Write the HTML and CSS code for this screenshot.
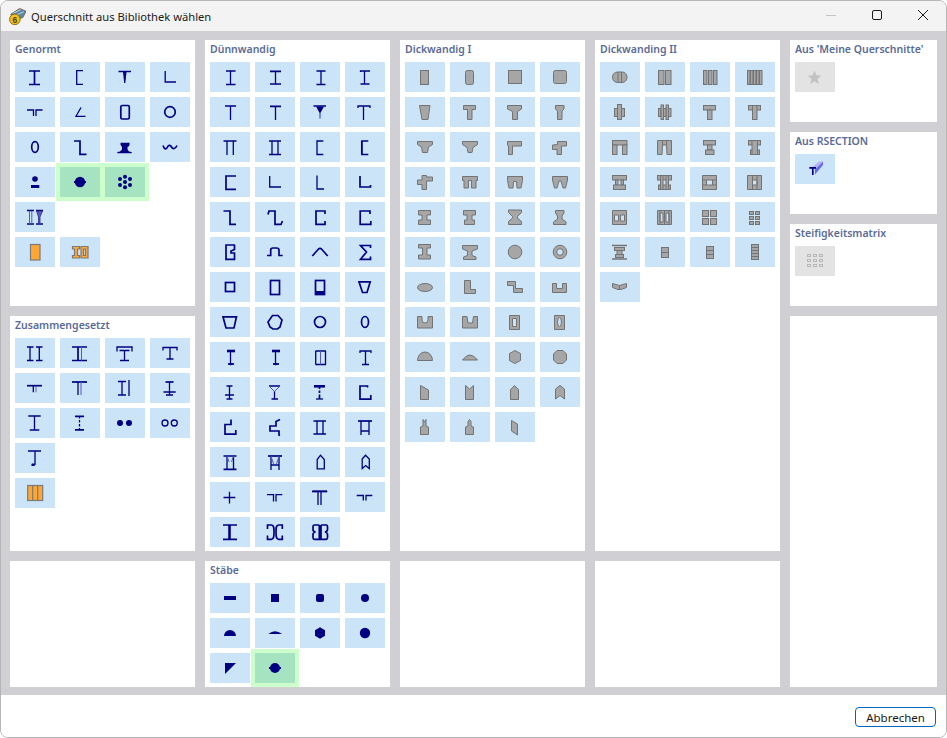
FILE: index.html
```html
<!DOCTYPE html>
<html lang="de">
<head>
<meta charset="utf-8">
<title>Querschnitt aus Bibliothek wählen</title>
<link rel="stylesheet" href="styles.css">
</head>
<body>
<div class="window">
<header class="titlebar">
<svg class="appicon" viewBox="0 0 16 16"><path d="M1.500 6L10 .5L16 3L13 9L6 11Z" fill="#5f87a8" stroke="#6b5a3a" stroke-width=".8"/><path d="M4 5L11 1.500M6 7L14 3.500" stroke="#cfe0ee" stroke-width=".8"/><circle cx="5.500" cy="10.700" r="5" fill="#f3c21f" stroke="#7a5c10" stroke-width=".8"/><text x="3.200" y="14.200" class="appsix">6</text></svg>
<span class="titletext">Querschnitt aus Bibliothek wählen</span>
<div class="winctl">
<svg class="ctl" viewBox="0 0 12 12"><path d="M1 5.500H11" stroke="#c4c4c4"/></svg>
<svg class="ctl" viewBox="0 0 12 12"><rect x="1.500" y=".5" width="9" height="9" rx="1.500" fill="none" stroke="#1a1a1a"/></svg>
<svg class="ctl" viewBox="0 0 12 12"><path d="M1 0L11 10M11 0L1 10" stroke="#1a1a1a" fill="none"/></svg>
</div>
</header>
<main class="content">

<section class="panel p-genormt">
<h2>Genormt</h2>
<div class="tiles">
<button class="tile"><svg class="ic n" viewBox="0 0 40 30"><path d="M14 9H25M14 22.500H25"/><path class="w2" d="M19.500 9V22.500"/></svg></button>
<button class="tile"><svg class="ic n" viewBox="0 0 40 30"><path d="M23 8.700H16.700V22.300H23"/></svg></button>
<button class="tile"><svg class="ic n" viewBox="0 0 40 30"><path class="w2" d="M13.500 9.500H26"/><path class="sf" d="M18 10H21.500L20.300 21H19.200Z"/></svg></button>
<button class="tile"><svg class="ic n" viewBox="0 0 40 30"><path d="M15.200 9V20H26"/></svg></button>

<button class="tile"><svg class="ic n" viewBox="0 0 40 30"><path d="M12 13H18.500V19M27.500 13H21V19"/></svg></button>
<button class="tile"><svg class="ic n" viewBox="0 0 40 30"><path d="M21 10.500L16 19.300H25.500"/></svg></button>
<button class="tile"><svg class="ic n" viewBox="0 0 40 30"><rect class="w2" x="15.800" y="8.500" width="8.500" height="13.500" rx="1.500"/></svg></button>
<button class="tile"><svg class="ic n" viewBox="0 0 40 30"><circle class="w2" cx="20" cy="15" r="5.300"/></svg></button>

<button class="tile"><svg class="ic n" viewBox="0 0 40 30"><ellipse class="w2" cx="20" cy="15" rx="3.300" ry="5.300"/></svg></button>
<button class="tile"><svg class="ic n" viewBox="0 0 40 30"><path class="w2" d="M14 9H20V22.300H26.500"/></svg></button>
<button class="tile"><svg class="ic s" viewBox="0 0 40 30"><path d="M15.500 10.700H24.500Q25 14 22.500 15V17.500L24 19.500L26.700 20V21.300H12.300V20L15 19.500L17 17.500V15Q15 14 15.500 10.700Z"/></svg></button>
<button class="tile"><svg class="ic n" viewBox="0 0 40 30"><path class="w2" d="M13 13.500C14.500 18 16.500 17.500 17.500 15S20.500 13 21.500 15S25 18 27 13.500"/></svg></button>

<button class="tile"><svg class="ic s" viewBox="0 0 40 30"><circle cx="20" cy="12" r="2.800"/><rect x="16" y="18" width="8.300" height="3"/></svg></button>
<button class="tile sel"><svg class="ic s" viewBox="0 0 40 30"><circle cx="20" cy="15" r="5.200"/><rect x="14" y="14" width="12" height="2"/></svg></button>
<button class="tile sel"><svg class="ic s" viewBox="0 0 40 30"><circle cx="20" cy="9.700" r="2"/><circle cx="15" cy="12" r="2"/><circle cx="25" cy="12" r="2"/><circle cx="20" cy="15" r="2"/><circle cx="15" cy="18" r="2"/><circle cx="25" cy="18" r="2"/><circle cx="20" cy="20.300" r="2"/></svg></button>
<span class="slot"></span>

<button class="tile"><svg class="ic n" viewBox="0 0 40 30"><path d="M12 8.500H19M12 22H19M21 8.500H28M21 22H28"/><path class="lt" d="M14.500 9V21.500M16.800 9V21.500"/><path class="mid" d="M21.500 9H27.500L25 15V21.500H23.500V15Z"/></svg></button>
<span class="slot"></span><span class="slot"></span><span class="slot"></span>

<button class="tile"><svg class="ic o" viewBox="0 0 40 30"><rect x="15.500" y="7.500" width="9.500" height="15.500"/></svg></button>
<button class="tile"><svg class="ic o" viewBox="0 0 40 30"><path d="M12.500 9.500H19.500V12H17.500V18.500H19.500V21H12.500V18.500H14.500V12H12.500Z"/><path fill-rule="evenodd" d="M21 9.500H28V21H21ZM23.500 12V18.500H25.500V12Z"/></svg></button>
</div>
</section>

<section class="panel p-duenn">
<h2>Dünnwandig</h2>
<div class="tiles">
<button class="tile"><svg class="ic n" viewBox="0 0 40 30"><path d="M16 9H25.500M16 22.500H25.500M20.500 9V22.500"/></svg></button>
<button class="tile"><svg class="ic n" viewBox="0 0 40 30"><path class="w2" d="M15 9.300H26M15 22H26"/><path d="M20.500 9V22.500"/></svg></button>
<button class="tile"><svg class="ic n" viewBox="0 0 40 30"><path d="M16.500 9H25.500M16.500 22.500H25.500M21 9V22.500"/></svg></button>
<button class="tile"><svg class="ic n" viewBox="0 0 40 30"><path d="M15.500 10V9H25M15.500 22H24.500M19.500 9V22"/></svg></button>

<button class="tile"><svg class="ic n" viewBox="0 0 40 30"><path d="M15 9H26M20.500 9V23"/></svg></button>
<button class="tile"><svg class="ic n" viewBox="0 0 40 30"><path class="w2" d="M15 9.300H26"/><path d="M20.500 9V23"/></svg></button>
<button class="tile"><svg class="ic n" viewBox="0 0 40 30"><path d="M13.500 9H26"/><path class="sf" d="M16 9.500H24L20.400 16V21.500H19.600V16Z"/></svg></button>
<button class="tile"><svg class="ic n" viewBox="0 0 40 30"><path d="M13 11V9H25V11M18.500 9V23"/></svg></button>

<button class="tile"><svg class="ic n" viewBox="0 0 40 30"><path d="M13.500 9H26.500M17 9V23M23.300 9V23"/></svg></button>
<button class="tile"><svg class="ic n" viewBox="0 0 40 30"><path d="M14 9H26M14 22.500H26M17 9V22.500M23 9V22.500"/></svg></button>
<button class="tile"><svg class="ic n" viewBox="0 0 40 30"><path d="M23.300 9H17V22.500H23.300"/></svg></button>
<button class="tile"><svg class="ic n" viewBox="0 0 40 30"><path d="M23.300 9H16.800V22.500H23.300"/><path class="w2" d="M16.800 9V22.500"/></svg></button>

<button class="tile"><svg class="ic n" viewBox="0 0 40 30"><path class="w2" d="M26 9H16V22.300H26"/></svg></button>
<button class="tile"><svg class="ic n" viewBox="0 0 40 30"><path d="M14.700 9V20H26"/></svg></button>
<button class="tile"><svg class="ic n" viewBox="0 0 40 30"><path d="M17 8.500V22H24"/></svg></button>
<button class="tile"><svg class="ic n" viewBox="0 0 40 30"><path class="w2" d="M15 9V20H25.500V18"/></svg></button>

<button class="tile"><svg class="ic n" viewBox="0 0 40 30"><path class="w2" d="M13.500 9H20V22.300H26"/></svg></button>
<button class="tile"><svg class="ic n" viewBox="0 0 40 30"><path class="w2" d="M13 12.500L14 9H20V22.300H26L27.500 19"/></svg></button>
<button class="tile"><svg class="ic n" viewBox="0 0 40 30"><path class="w2" d="M25 12V9H16V22.300H25V19"/></svg></button>
<button class="tile"><svg class="ic n" viewBox="0 0 40 30"><path class="w2" d="M25 12V9H15.200V22.300H25.800V19"/></svg></button>

<button class="tile"><svg class="ic n" viewBox="0 0 40 30"><path class="w2" d="M25 8H16V22.300H24.500V16H21V14L24.500 12.500V8"/></svg></button>
<button class="tile"><svg class="ic n" viewBox="0 0 40 30"><path class="w2" d="M12 18.500H15.700V13Q15.700 11 18 11H21.500Q24 11 24 13V18.500H27.700"/></svg></button>
<button class="tile"><svg class="ic n" viewBox="0 0 40 30"><path class="w2" d="M12.300 19L18.500 12Q20 10.700 21.500 12L27.700 19"/></svg></button>
<button class="tile"><svg class="ic n" viewBox="0 0 40 30"><path class="w2" d="M25.500 11V8.500H15.500L21.500 15L15.500 22.300H25.500V19.500"/></svg></button>

<button class="tile"><svg class="ic n" viewBox="0 0 40 30"><rect class="w2" x="15.500" y="10.500" width="9" height="9"/></svg></button>
<button class="tile"><svg class="ic n" viewBox="0 0 40 30"><rect class="w2" x="15.500" y="8.500" width="9" height="14"/></svg></button>
<button class="tile"><svg class="ic n" viewBox="0 0 40 30"><rect class="w2" x="15.500" y="8.500" width="9" height="14"/><rect class="sf" x="15" y="19" width="10" height="4"/></svg></button>
<button class="tile"><svg class="ic n" viewBox="0 0 40 30"><path class="w2" d="M14 9.800H25.200L22 20.500H17.500Z"/></svg></button>

<button class="tile"><svg class="ic n" viewBox="0 0 40 30"><path class="w2" d="M13 9.800H26.500L24 21H16Z"/></svg></button>
<button class="tile"><svg class="ic n" viewBox="0 0 40 30"><path class="w2" d="M17.500 8.500H23L27 13L25 20L22.500 22H18L15 20L13 15Z"/></svg></button>
<button class="tile"><svg class="ic n" viewBox="0 0 40 30"><circle class="w2" cx="20" cy="15" r="5.500"/></svg></button>
<button class="tile"><svg class="ic n" viewBox="0 0 40 30"><ellipse class="w2" cx="20" cy="15" rx="3.500" ry="5.500"/></svg></button>

<button class="tile"><svg class="ic n" viewBox="0 0 40 30"><path class="w3" d="M17 9H25"/><path class="w2" d="M18 22H24"/><path d="M20.500 9V23"/><path class="sf" d="M18 21.500H23.500L20.700 23.500Z"/></svg></button>
<button class="tile"><svg class="ic n" viewBox="0 0 40 30"><path class="w3" d="M17 9H25"/><path class="w2" d="M18 22H24"/><path d="M20.500 9V23"/><path class="sf" d="M18 21.500H23.500L20.700 23.500Z"/></svg></button>
<button class="tile"><svg class="ic n" viewBox="0 0 40 30"><path class="w2" d="M15.500 9H26M15.500 22.500H26"/><path d="M15.700 9V22.500M25.500 9V22.500"/><path class="lt" d="M20.500 9V22.500"/></svg></button>
<button class="tile"><svg class="ic n" viewBox="0 0 40 30"><path d="M15 11V9H26V11M20.500 9V22.500M17 22.500H24"/></svg></button>

<button class="tile"><svg class="ic n" viewBox="0 0 40 30"><path d="M16.500 9H22.500M15 18H24M16.500 22H22.500M19.500 9V22"/></svg></button>
<button class="tile"><svg class="ic n" viewBox="0 0 40 30"><path d="M14 9H25M16.500 22H23M19.500 14V22"/><path class="lt" d="M14.500 9.500L19.500 14.500L24.500 9.500"/></svg></button>
<button class="tile"><svg class="ic n" viewBox="0 0 40 30"><path class="w3" d="M14 9.300H25"/><path d="M16 22H23"/><path class="w2" d="M19.500 9V12M19.500 13.500V16M19.500 17.500V22"/></svg></button>
<button class="tile"><svg class="ic n" viewBox="0 0 40 30"><path class="w2" d="M22.500 10.500V9H15V22.200H25.800V18"/></svg></button>

<button class="tile"><svg class="ic n" viewBox="0 0 40 30"><path class="w2" d="M21 7.500V12.500H15V22.200H25.800V18"/></svg></button>
<button class="tile"><svg class="ic n" viewBox="0 0 40 30"><path class="w2" d="M25 7.500L21 9.500V14H15V19H24V23L25 23.500"/></svg></button>
<button class="tile"><svg class="ic n" viewBox="0 0 40 30"><path class="w2" d="M13.500 9H26M13.500 22H26"/><path d="M17 9V22M23 9V22"/></svg></button>
<button class="tile"><svg class="ic n" viewBox="0 0 40 30"><path class="w2" d="M13 9H27"/><path d="M16 9V23M24 9V23M16 19H24"/></svg></button>

<button class="tile"><svg class="ic n" viewBox="0 0 40 30"><path class="w2" d="M13.500 9H26.500M13.500 22.300H26.500"/><path d="M17 9V22M23.500 9V22"/><path class="lt" d="M17 9L19 15M23.500 9L21.500 15"/></svg></button>
<button class="tile"><svg class="ic n" viewBox="0 0 40 30"><path class="w2" d="M13 9H27"/><path d="M16 9V23M24 9V23M16 18H24"/><path class="lt" d="M16 9L18.500 17M24 9L21.500 17"/></svg></button>
<button class="tile"><svg class="ic n" viewBox="0 0 40 30"><path d="M17.200 12.500L20.500 8.200L24.300 12.500V21.800H17.200Z"/></svg></button>
<button class="tile"><svg class="ic n" viewBox="0 0 40 30"><path d="M17.200 12L20.500 8.200L24.300 12V21.500L20.700 18.500L17.200 21.500Z"/></svg></button>

<button class="tile"><svg class="ic n" viewBox="0 0 40 30"><path d="M13.500 15.500H25.300M19.500 9.700V21.500"/></svg></button>
<button class="tile"><svg class="ic n" viewBox="0 0 40 30"><path d="M12 12.700H18.500V19.500M27.300 12.700H21V19.500"/></svg></button>
<button class="tile"><svg class="ic n" viewBox="0 0 40 30"><path d="M12 9.500H27.300M18 9.500V23M21 9.500V23"/><path class="w2" d="M12.500 9.300H27"/></svg></button>
<button class="tile"><svg class="ic n" viewBox="0 0 40 30"><path d="M11.700 13.500H18.300V18.500M27.300 13.500H21V18.500"/></svg></button>

<button class="tile"><svg class="ic n" viewBox="0 0 40 30"><path class="w2" d="M13 8H27M13 22.300H27"/><path class="w3" d="M19.500 8V22.300"/></svg></button>
<button class="tile"><svg class="ic n" viewBox="0 0 40 30"><path class="w2" d="M12.500 12V8H16.500C19 8 19 11 19 15S19 22.300 16.500 22.300H12.500V18.500M27.300 12V8H23.500C21 8 21 11 21 15S21 22.300 23.500 22.300H27.300V18.500"/></svg></button>
<button class="tile"><svg class="ic n" viewBox="0 0 40 30"><path class="w2" d="M19.300 8H14.500Q13 8 13 9.500V12.500Q13 14.500 15.500 15Q13 15.500 13 17.500V20.800Q13 22.300 14.500 22.300H19.300V8M21 8H26Q27.500 8 27.500 9.500V12.500Q27.500 14.500 25 15Q27.500 15.500 27.500 17.500V20.800Q27.500 22.300 26 22.300H21V8"/></svg></button>
</div>
</section>

<section class="panel p-dick1">
<h2>Dickwandig I</h2>
<div class="tiles">
<button class="tile"><svg class="ic g" viewBox="0 0 40 30"><rect x="15.500" y="8.500" width="8" height="14"/></svg></button>
<button class="tile"><svg class="ic g" viewBox="0 0 40 30"><rect x="15.500" y="8.500" width="8" height="14" rx="2"/></svg></button>
<button class="tile"><svg class="ic g" viewBox="0 0 40 30"><rect x="13.500" y="8.500" width="13" height="13"/></svg></button>
<button class="tile"><svg class="ic g" viewBox="0 0 40 30"><rect x="13.500" y="8.500" width="13" height="13" rx="2"/></svg></button>

<button class="tile"><svg class="ic g" viewBox="0 0 40 30"><path d="M14.500 8.500H25L23 22.500H17Z"/></svg></button>
<button class="tile"><svg class="ic g" viewBox="0 0 40 30"><path d="M13.500 8.500H25.500V12.500H22V22.500H17.500V12.500H13.500Z"/></svg></button>
<button class="tile"><svg class="ic g" viewBox="0 0 40 30"><path d="M12.500 8.500H26.500V12L22.500 14.500V22.500H17.500V14.500L12.500 12Z"/></svg></button>
<button class="tile"><svg class="ic g" viewBox="0 0 40 30"><path d="M15.500 8.500H24V12L22 14V22.500H17.500V14L15.500 12Z"/></svg></button>

<button class="tile"><svg class="ic g" viewBox="0 0 40 30"><path d="M12.500 9.500H27.500V12.500L23.500 15L22.500 20.500H17.500L16.500 15L12.500 12.500Z"/></svg></button>
<button class="tile"><svg class="ic g" viewBox="0 0 40 30"><path d="M12.500 9.500H27.500V12.500L23 15.500L22 20.500H18L17 15.500L12.500 12.500Z"/></svg></button>
<button class="tile"><svg class="ic g" viewBox="0 0 40 30"><path d="M12.500 9.500H26.500V14H17.500V22.500H13.500V14L12.500 13Z"/></svg></button>
<button class="tile"><svg class="ic g" viewBox="0 0 40 30"><path d="M17.500 9.500H26.500V14H21.500V22.500H17V17.500H12.500V13L17.500 12.500Z"/></svg></button>

<button class="tile"><svg class="ic g" viewBox="0 0 40 30"><path d="M17 8.500H21.500V10H27.500V14H21.500V22.500H17V17.500H12.500V13H17Z"/></svg></button>
<button class="tile"><svg class="ic g" viewBox="0 0 40 30"><path d="M12.500 9.500H27.500V13.500H26V21H21.500V13.500H18.500V21H14V13.500H12.500Z"/></svg></button>
<button class="tile"><svg class="ic g" viewBox="0 0 40 30"><path d="M12.500 9.500H27.500V13.500L26 21H22L21.500 14.500H18.500L18 21H14L12.500 13.500Z"/></svg></button>
<button class="tile"><svg class="ic g" viewBox="0 0 40 30"><path d="M12.500 9.500H27.500V13L25.500 21H23L21 14H19L17 21H14.500L12.500 13Z"/></svg></button>

<button class="tile"><svg class="ic g" viewBox="0 0 40 30"><path d="M13.500 8.500H25.500V13H22V18H25.500V22.500H13.500V18H17V13H13.500Z"/></svg></button>
<button class="tile"><svg class="ic g" viewBox="0 0 40 30"><path d="M13.500 8.500H25.500V13H22V18H24.500V22.500H14.500V18H17V13H13.500Z"/></svg></button>
<button class="tile"><svg class="ic g" viewBox="0 0 40 30"><path d="M13.500 8H26.500V10.500L22.500 14.500V16L26.500 19.500V22.500H13.500V19.500L17.500 16V14.500L13.500 10.500Z"/></svg></button>
<button class="tile"><svg class="ic g" viewBox="0 0 40 30"><path d="M15.500 8.500H24V11L22 14V17L26 20V22.500H13.500V20L17.500 17V14L15.500 11Z"/></svg></button>

<button class="tile"><svg class="ic g" viewBox="0 0 40 30"><path d="M13.500 7.500H25.500V11H22V18H25.500V22H13.500V18H17.500V11H13.500Z"/></svg></button>
<button class="tile"><svg class="ic g" viewBox="0 0 40 30"><path d="M12.500 8.500H27.500V12L22 14V18.500L26 20V22.500H13.500V20L17.500 18.500V14L12.500 12Z"/></svg></button>
<button class="tile"><svg class="ic g" viewBox="0 0 40 30"><circle cx="20" cy="15" r="6.800"/></svg></button>
<button class="tile"><svg class="ic g" viewBox="0 0 40 30"><path fill-rule="evenodd" d="M20 8.200A6.800 6.800 0 1 1 20 21.800A6.800 6.800 0 1 1 20 8.200ZM20 11.700A3.300 3.300 0 1 0 20 18.300A3.300 3.300 0 1 0 20 11.700Z"/></svg></button>

<button class="tile"><svg class="ic g" viewBox="0 0 40 30"><ellipse cx="20" cy="15.500" rx="7.500" ry="4"/></svg></button>
<button class="tile"><svg class="ic g" viewBox="0 0 40 30"><path d="M14.500 8.500H20.500V17.500H25.500V21.500H14.500Z"/></svg></button>
<button class="tile"><svg class="ic g" viewBox="0 0 40 30"><path d="M12.500 9.500H20.500V16.500H27.500V20.500H18.500V13.500H12.500Z"/></svg></button>
<button class="tile"><svg class="ic g" viewBox="0 0 40 30"><path d="M12.500 11.500H16.500V16.500H22.500V11.500H26.500V20.500H12.500Z"/></svg></button>

<button class="tile"><svg class="ic g" viewBox="0 0 40 30"><path d="M12.500 9.500H17V13Q17 16 20 16Q23 16 23 13V9.500H27.500V21H12.500Z"/></svg></button>
<button class="tile"><svg class="ic g" viewBox="0 0 40 30"><path d="M12.500 9.500H17L18 16H22.500L23.500 9.500H27.500V21H12.500Z"/></svg></button>
<button class="tile"><svg class="ic g" viewBox="0 0 40 30"><path fill-rule="evenodd" d="M14.500 8.500H24.500V22.500H14.500ZM17.500 11.500V19.500H21.500V11.500Z"/></svg></button>
<button class="tile"><svg class="ic g" viewBox="0 0 40 30"><path fill-rule="evenodd" d="M14.500 8.500H24.500V22.500H14.500ZM19.500 10.500C17 10.500 17 19.500 19.500 19.500C22 19.500 22 10.500 19.500 10.500Z"/></svg></button>

<button class="tile"><svg class="ic g" viewBox="0 0 40 30"><path d="M12.500 18.500A7.500 8.500 0 0 1 27.500 18.500Z"/></svg></button>
<button class="tile"><svg class="ic g" viewBox="0 0 40 30"><path d="M12.500 18Q20 8 27.500 18Z"/></svg></button>
<button class="tile"><svg class="ic g" viewBox="0 0 40 30"><path d="M20 8.500L25.500 11.500V18.500L20 21.500L14.500 18.500V11.500Z"/></svg></button>
<button class="tile"><svg class="ic g" viewBox="0 0 40 30"><path d="M17 8.500H23L26.500 12V18L23 21.500H17L13.500 18V12Z"/></svg></button>

<button class="tile"><svg class="ic g" viewBox="0 0 40 30"><path d="M15.500 8.500L23.500 13V22.500H15.500Z"/></svg></button>
<button class="tile"><svg class="ic g" viewBox="0 0 40 30"><path d="M15.500 8.500L19.500 12L23.500 8.500V22.500H15.500Z"/></svg></button>
<button class="tile"><svg class="ic g" viewBox="0 0 40 30"><path d="M15.500 12.500L19.500 8.500L23.500 12.500V22.500H15.500Z"/></svg></button>
<button class="tile"><svg class="ic g" viewBox="0 0 40 30"><path d="M15.500 12L20 8.500L24.500 12V22L20 18.500L15.500 22Z"/></svg></button>

<button class="tile"><svg class="ic g" viewBox="0 0 40 30"><path d="M18 7.500L19.500 10L21 7.500V14L23.500 15V22.500H15.500V15L18 14Z"/></svg></button>
<button class="tile"><svg class="ic g" viewBox="0 0 40 30"><path d="M18 9.500L19.500 7.500L21 9.500V14L23.500 15V22.500H15.500V15L18 14Z"/></svg></button>
<button class="tile"><svg class="ic g" viewBox="0 0 40 30"><path d="M16.500 8.500L22.500 12V23L16.500 19Z"/></svg></button>
</div>
</section>

<section class="panel p-dick2">
<h2>Dickwanding II</h2>
<div class="tiles">
<button class="tile"><svg class="ic g" viewBox="0 0 40 30"><rect x="12.500" y="10" width="14.500" height="10.500" rx="5"/><path d="M18 10V20.500M21.500 10V20.500"/></svg></button>
<button class="tile"><svg class="ic g" viewBox="0 0 40 30"><rect x="13.500" y="8.500" width="5.500" height="14"/><rect x="20.500" y="8.500" width="5.500" height="14"/></svg></button>
<button class="tile"><svg class="ic g" viewBox="0 0 40 30"><rect x="13.500" y="8.500" width="3.500" height="14"/><rect x="18.500" y="8.500" width="3.500" height="14"/><rect x="23.500" y="8.500" width="3.500" height="14"/></svg></button>
<button class="tile"><svg class="ic g" viewBox="0 0 40 30"><rect x="12.500" y="8.500" width="2.500" height="14"/><rect x="15.500" y="8.500" width="2.500" height="14"/><rect x="18.500" y="8.500" width="2.500" height="14"/><rect x="21.500" y="8.500" width="2.500" height="14"/><rect x="24.500" y="8.500" width="2.500" height="14"/></svg></button>

<button class="tile"><svg class="ic g" viewBox="0 0 40 30"><rect x="14.500" y="11.500" width="3" height="8"/><rect x="21.500" y="11.500" width="3" height="8"/><rect x="17.500" y="7.500" width="4" height="15"/></svg></button>
<button class="tile"><svg class="ic g" viewBox="0 0 40 30"><rect x="13.500" y="11.500" width="2.500" height="8"/><rect x="23.500" y="11.500" width="2.500" height="8"/><rect x="16" y="8" width="2.500" height="14.500"/><rect x="21" y="8" width="2.500" height="14.500"/><rect x="18.500" y="11.500" width="2.500" height="8"/></svg></button>
<button class="tile"><svg class="ic g" viewBox="0 0 40 30"><rect x="13.500" y="8.500" width="12" height="4.500"/><rect x="17.500" y="13" width="4.500" height="9.500"/></svg></button>
<button class="tile"><svg class="ic g" viewBox="0 0 40 30"><rect x="13.500" y="8.500" width="12" height="4.500"/><rect x="17.500" y="8.500" width="4.500" height="14"/></svg></button>

<button class="tile"><svg class="ic g" viewBox="0 0 40 30"><rect x="12.500" y="8.500" width="14.500" height="4.500"/><rect x="12.500" y="13" width="4.500" height="9.500"/><rect x="22.500" y="13" width="4.500" height="9.500"/></svg></button>
<button class="tile"><svg class="ic g" viewBox="0 0 40 30"><path d="M12.500 8.500H26.500V22.500H22L21.500 13H17.500L17 22.500H12.500Z"/><path d="M17.500 8.500V13M21.500 8.500V13"/></svg></button>
<button class="tile"><svg class="ic g" viewBox="0 0 40 30"><rect x="13.500" y="8.500" width="12" height="4.500"/><rect x="17.500" y="13" width="4.500" height="5"/><rect x="15.500" y="18" width="8.500" height="4.500"/></svg></button>
<button class="tile"><svg class="ic g" viewBox="0 0 40 30"><rect x="13.500" y="8.500" width="12" height="4.500"/><rect x="15.500" y="18" width="9" height="4.500"/><rect x="17" y="8.500" width="5.500" height="14"/></svg></button>

<button class="tile"><svg class="ic g" viewBox="0 0 40 30"><rect x="12.500" y="8.500" width="14" height="4.500"/><rect x="15.500" y="13" width="2.500" height="5"/><rect x="21" y="13" width="2.500" height="5"/><rect x="13.500" y="18" width="12" height="4.500"/></svg></button>
<button class="tile"><svg class="ic g" viewBox="0 0 40 30"><rect x="12.500" y="8.500" width="14" height="4.500"/><rect x="13.500" y="18" width="12" height="4.500"/><rect x="15.500" y="8.500" width="2.500" height="14"/><rect x="21" y="8.500" width="2.500" height="14"/></svg></button>
<button class="tile"><svg class="ic g" viewBox="0 0 40 30"><path fill-rule="evenodd" d="M12.500 8.500H26.500V22.500H12.500ZM16.500 13V18H22.500V13Z"/><path d="M12.500 13H16.500M22.500 13H26.500M12.500 18H16.500M22.500 18H26.500"/></svg></button>
<button class="tile"><svg class="ic g" viewBox="0 0 40 30"><path fill-rule="evenodd" d="M12.500 8.500H26.500V22.500H12.500ZM17.500 13V18H22V13Z"/><path d="M17.500 8.500V22.500M22 8.500V22.500"/></svg></button>

<button class="tile"><svg class="ic g" viewBox="0 0 40 30"><path fill-rule="evenodd" d="M12.500 8.500H26.500V22.500H12.500ZM14.500 13V19H18.500V13ZM20.500 13V19H24.500V13Z"/></svg></button>
<button class="tile"><svg class="ic g" viewBox="0 0 40 30"><path fill-rule="evenodd" d="M12.500 8.500H26.500V22.500H12.500ZM15 11V20H18V11ZM21 11V20H24V11Z"/><path d="M15 8.500V22.500M24 8.500V22.500M19.500 8.500V22.500"/></svg></button>
<button class="tile"><svg class="ic g" viewBox="0 0 40 30"><rect x="12.500" y="8.500" width="6" height="6"/><rect x="20.500" y="8.500" width="6" height="6"/><rect x="12.500" y="16.500" width="6" height="6"/><rect x="20.500" y="16.500" width="6" height="6"/></svg></button>
<button class="tile"><svg class="ic g" viewBox="0 0 40 30"><rect x="14.500" y="9.500" width="4" height="3"/><rect x="20.500" y="9.500" width="4" height="3"/><rect x="14.500" y="14.500" width="4" height="3"/><rect x="20.500" y="14.500" width="4" height="3"/><rect x="14.500" y="19.500" width="4" height="3"/><rect x="20.500" y="19.500" width="4" height="3"/></svg></button>

<button class="tile"><svg class="ic g" viewBox="0 0 40 30"><path d="M12 8.500H27M12 22H27" class="thick"/><rect x="14.500" y="10.500" width="10" height="3"/><rect x="17" y="13.500" width="5" height="4"/><rect x="15.500" y="17.500" width="8" height="3"/></svg></button>
<button class="tile"><svg class="ic g" viewBox="0 0 40 30"><rect x="16.500" y="10.500" width="7" height="10"/><path d="M16.500 15.500H23.500"/></svg></button>
<button class="tile"><svg class="ic g" viewBox="0 0 40 30"><rect x="16.500" y="9.500" width="7" height="12"/><path d="M16.500 13.500H23.500M16.500 17.500H23.500"/></svg></button>
<button class="tile"><svg class="ic g" viewBox="0 0 40 30"><rect x="16.500" y="7.500" width="7" height="15"/><path d="M16.500 10.500H23.500M16.500 13.500H23.500M16.500 16.500H23.500M16.500 19.500H23.500"/></svg></button>

<button class="tile"><svg class="ic g" viewBox="0 0 40 30"><path d="M12.500 11.500L19.500 13.500L26.500 11.500V15.500L21 17.500H18L12.500 15.500Z"/><path d="M19.500 13.500V17.500"/></svg></button>
</div>
</section>

<section class="panel p-meine">
<h2>Aus 'Meine Querschnitte'</h2>
<div class="tiles">
<button class="tile off"><svg class="ic" viewBox="0 0 40 30"><path class="star" d="M19.500 8.500L21.400 13.300L26.300 13.700L22.500 17L23.800 22L19.500 19.300L15.200 22L16.500 17L12.700 13.700L17.600 13.300Z"/></svg></button>
</div>
</section>

<section class="panel p-rsec">
<h2>Aus RSECTION</h2>
<div class="tiles">
<button class="tile"><svg class="ic" viewBox="0 0 40 30"><path class="prism" d="M17 13.300L24 7.500H28L21 14.500H17Z"/><path class="prism2" d="M28 7.500V11L20 20.500V14.500L21 14.500Z"/><g class="n"><path class="w2" d="M14.300 13.800H21M17.800 13.800V21"/></g></svg></button>
</div>
</section>

<section class="panel p-steif">
<h2>Steifigkeitsmatrix</h2>
<div class="tiles">
<button class="tile off"><svg class="ic m" viewBox="0 0 40 30"><rect x="12.500" y="8.500" width="3" height="2"/><rect x="18.500" y="8.500" width="3" height="2"/><rect x="24.500" y="8.500" width="3" height="2"/><rect x="12.500" y="13.500" width="3" height="2"/><rect x="18.500" y="13.500" width="3" height="2"/><rect x="24.500" y="13.500" width="3" height="2"/><rect x="12.500" y="18.500" width="3" height="2"/><rect x="18.500" y="18.500" width="3" height="2"/><rect x="24.500" y="18.500" width="3" height="2"/></svg></button>
</div>
</section>

<section class="panel p-empty5"></section>
<section class="panel p-empty1"></section>

<section class="panel p-staebe">
<h2>Stäbe</h2>
<div class="tiles">
<button class="tile"><svg class="ic s" viewBox="0 0 40 30"><rect x="14" y="13" width="12" height="4"/></svg></button>
<button class="tile"><svg class="ic s" viewBox="0 0 40 30"><rect x="16" y="11" width="8" height="8"/></svg></button>
<button class="tile"><svg class="ic s" viewBox="0 0 40 30"><rect x="16" y="11" width="8" height="8" rx="2"/></svg></button>
<button class="tile"><svg class="ic s" viewBox="0 0 40 30"><circle cx="20" cy="15" r="4"/></svg></button>

<button class="tile"><svg class="ic s" viewBox="0 0 40 30"><path d="M14 18A6 6 0 0 1 26 18Z"/></svg></button>
<button class="tile"><svg class="ic s" viewBox="0 0 40 30"><path d="M13.300 16Q20 10.500 27 16Z"/></svg></button>
<button class="tile"><svg class="ic s" viewBox="0 0 40 30"><path d="M20 9.300L25 12.200V17.800L20 20.700L15 17.800V12.200Z"/></svg></button>
<button class="tile"><svg class="ic s" viewBox="0 0 40 30"><circle cx="20" cy="15" r="5.200"/></svg></button>

<button class="tile"><svg class="ic s" viewBox="0 0 40 30"><path d="M15 10H26L15 21Z"/></svg></button>
<button class="tile sel"><svg class="ic s" viewBox="0 0 40 30"><circle cx="20" cy="15" r="5"/><rect x="14" y="14" width="12" height="2"/></svg></button>
</div>
</section>

<section class="panel p-empty3"></section>
<section class="panel p-empty4"></section>

<section class="panel p-zus">
<h2>Zusammengesetzt</h2>
<div class="tiles">
<button class="tile"><svg class="ic n" viewBox="0 0 40 30"><path d="M12 9H18.500M21 9H27.500M12 22.500H18.500M21 22.500H27.500M15 9V22.500M24.300 9V22.500"/></svg></button>
<button class="tile"><svg class="ic n" viewBox="0 0 40 30"><path d="M12 9H27M12 22.500H27"/><path class="w2" d="M18 9V22.500"/><path class="lt" d="M21.500 9V22.500"/></svg></button>
<button class="tile"><svg class="ic n" viewBox="0 0 40 30"><path d="M12 13.500V9H27V13.500M14.500 12.500H24.500M15 22.500H24M19.500 12.500V22.500"/></svg></button>
<button class="tile"><svg class="ic n" viewBox="0 0 40 30"><path d="M13 12.500V9.500H27V12.500M20 9.500V21M16.500 21H23.500"/></svg></button>

<button class="tile"><svg class="ic n" viewBox="0 0 40 30"><path class="w2" d="M12 12.700H27"/><path d="M18.300 13V19.300"/><path class="lt" d="M21 13V19.300"/></svg></button>
<button class="tile"><svg class="ic n" viewBox="0 0 40 30"><path class="w2" d="M12 9H27"/><path d="M18 9V22"/><path class="lt" d="M21 9V22"/></svg></button>
<button class="tile"><svg class="ic n" viewBox="0 0 40 30"><path d="M13 8.500H21M13 22H21M17 8.500V22M24 7V23"/></svg></button>
<button class="tile"><svg class="ic n" viewBox="0 0 40 30"><path class="w2" d="M15.500 9H23.500"/><path d="M19.500 9V22M13.500 19H25.700M16 22H23"/></svg></button>

<button class="tile"><svg class="ic n" viewBox="0 0 40 30"><path d="M13.300 8H25.700M14.700 22H24.300M19.500 8V22"/></svg></button>
<button class="tile"><svg class="ic n" viewBox="0 0 40 30"><path class="w2" d="M15 8.300H24M15 21.800H24"/><path d="M19.500 8V10.500M19.500 12V14.500M19.500 16V18.500M19.500 20V22"/></svg></button>
<button class="tile"><svg class="ic s" viewBox="0 0 40 30"><circle cx="15" cy="15" r="3"/><circle cx="24" cy="15" r="3"/></svg></button>
<button class="tile"><svg class="ic n" viewBox="0 0 40 30"><circle cx="15" cy="15" r="3"/><circle cx="24.300" cy="15" r="3"/></svg></button>

<button class="tile"><svg class="ic n" viewBox="0 0 40 30"><path d="M13 8H26M20 8V22"/><path class="w2" d="M16.500 22H19.500"/><path class="sf" d="M16.800 20.500H19.500V23H16.800Z"/></svg></button>
<span class="slot"></span><span class="slot"></span><span class="slot"></span>

<button class="tile"><svg class="ic o" viewBox="0 0 40 30"><rect x="12.700" y="7.500" width="15" height="15"/><path d="M17.700 7.500V22.500M22.700 7.500V22.500"/></svg></button>
</div>
</section>

</main>
<footer class="footer">
<button class="cancel">Abbrechen</button>
</footer>
</div>
</body>
</html>
```
FILE: styles.css
```css
* { box-sizing: border-box; }
html, body { margin: 0; padding: 0; background: #fff; }
body { width: 947px; height: 738px; overflow: hidden; font-family: "Noto Sans", "Open Sans", sans-serif; }

.window {
  width: 947px; height: 738px;
  border: 1px solid #b5b5b5;
  border-radius: 8px;
  overflow: hidden;
  display: flex; flex-direction: column;
  background: #fff;
}

.titlebar {
  height: 30px; flex: none;
  background: #f3f3f3;
  display: flex; align-items: center;
  padding-left: 8px;
}
.appicon { width: 17px; height: 17px; flex: none; }
.appsix { font: bold 8px "Liberation Sans", sans-serif; fill: #5a3d00; }
.titletext { margin-left: 5px; font-size: 11.2px; color: #1a1a1a; white-space: nowrap; }
.winctl { margin-left: auto; display: flex; align-items: center; padding-right: 17px; gap: 34px; }
.ctl { width: 12px; height: 12px; display: block; margin-top: -1px; }

.content {
  height: 664px; flex: none;
  background: #d0cfd4;
  padding: 9px 9px 8px;
  display: grid;
  grid-template-columns: 185px 185px 185px 185px 147px;
  grid-template-rows: 82px 82px 82px 235px 126px;
  gap: 10px;
}

.panel { background: #fff; padding: 0 5px; min-width: 0; min-height: 0; }
.panel h2 {
  margin: 0; height: 22px;
  font-size: 10.5px; line-height: 18px; font-weight: 600;
  color: #5a6b97; white-space: nowrap;
}

.p-genormt { grid-column: 1; grid-row: 1 / 4; }
.p-zus     { grid-column: 1; grid-row: 4; }
.p-empty1  { grid-column: 1; grid-row: 5; }
.p-duenn   { grid-column: 2; grid-row: 1 / 5; }
.p-staebe  { grid-column: 2; grid-row: 5; }
.p-dick1   { grid-column: 3; grid-row: 1 / 5; }
.p-empty3  { grid-column: 3; grid-row: 5; }
.p-dick2   { grid-column: 4; grid-row: 1 / 5; }
.p-empty4  { grid-column: 4; grid-row: 5; }
.p-meine   { grid-column: 5; grid-row: 1; }
.p-rsec    { grid-column: 5; grid-row: 2; }
.p-steif   { grid-column: 5; grid-row: 3; }
.p-empty5  { grid-column: 5; grid-row: 4 / 6; }

.tiles { display: grid; grid-template-columns: repeat(4, 40px); grid-auto-rows: 30px; gap: 5px; }
.tile { width: 40px; height: 30px; padding: 0; border: 0; background: #cce4f7; display: block; }
.tile.sel { background: #a6e3c1; box-shadow: 0 0 0 4px #ccffcc; }
.tile.off { background: #e3e3e3; }
.slot { display: block; }

.ic { width: 40px; height: 30px; display: block; }
.n, .n * { fill: none; stroke: #000080; stroke-width: 1.3; }
.n .w2 { stroke-width: 1.7; }
.n .w3 { stroke-width: 2.6; }
.n .lt { stroke: #5a5ab4; stroke-width: 1; }
.n .sf { fill: #000080; stroke: none; }
.n .mid { fill: #5a5ab4; stroke: #2a2a98; stroke-width: .8; }
.s { fill: #000080; }
.g, .g * { fill: #a6a6a6; stroke: #737373; stroke-width: 1; }
.g .thick { stroke-width: 1.3; }
.o, .o * { fill: #ffa733; stroke: #7a7a7a; stroke-width: 1.2; }
.m rect { fill: #e3e3e3; stroke: #b8b8b8; stroke-width: 1; }
.star { fill: #c2c2c2; }
.prism { fill: #b4b4f4; }
.prism2 { fill: #6a6ae0; }

.footer {
  flex: 1; background: #fff;
  display: flex; justify-content: flex-end; align-items: flex-start;
  padding: 12px 10px 0 0;
}
.cancel {
  width: 81px; height: 20px; padding: 0;
  border: 1.5px solid #0067c0; border-radius: 4px;
  background: #fff;
  font: 11.5px "Noto Sans", sans-serif; color: #1a1a1a;
}
```
